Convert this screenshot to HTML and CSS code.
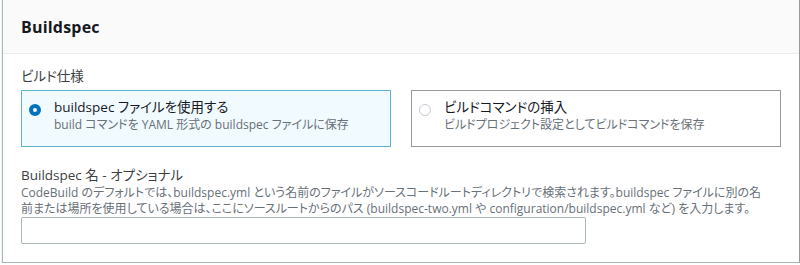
FILE: index.html
```html
<!DOCTYPE html>
<html lang="ja">
<head>
  <meta charset="UTF-8" />
  <title>Buildspec</title>
  <link rel="stylesheet" href="styles.css">
</head>
<body>
  <div class="panel">
    <div class="panel-header">
      <h2>Buildspec</h2>
    </div>

    <div class="panel-body">
      <div class="field">
        <div class="field-label">ビルド仕様</div>
        <div class="tiles">
          <label class="tile selected">
            <span class="radio"></span>
            <span class="tile-text">
              <span class="tile-title">buildspec ファイルを使用する</span>
              <span class="tile-desc">build コマンドを YAML 形式の buildspec ファイルに保存</span>
            </span>
          </label>
          <label class="tile">
            <span class="radio"></span>
            <span class="tile-text">
              <span class="tile-title">ビルドコマンドの挿入</span>
              <span class="tile-desc">ビルドプロジェクト設定としてビルドコマンドを保存</span>
            </span>
          </label>
        </div>
      </div>

      <div class="field">
        <div class="field-label">Buildspec 名 - オプショナル</div>
        <div class="field-desc">CodeBuild のデフォルトでは、buildspec.yml という名前のファイルがソースコードルートディレクトリで検索されます。buildspec ファイルに別の名前または場所を使用している場合は、ここにソースルートからのパス (buildspec-two.yml や configuration/buildspec.yml など) を入力します。</div>
        <input class="text-input" type="text">
      </div>
    </div>
  </div>
</body>
</html>
```

FILE: styles.css
```css
body {
  margin: 0;
  background-color: #ffffff;
  font-family: 'Open Sans', 'Noto Sans CJK JP', sans-serif;
  font-feature-settings: "palt";
  color: #16191f;
}

.panel {
  margin: -1px 0 0 2px;
  border: 1px solid #aab7b8;
  border-right-color: #999;
  box-shadow: 0 1px 1px rgba(0, 28, 36, 0.3);
  background-color: #ffffff;
  height: 264px;
  box-sizing: border-box;
}

.panel-header {
  background-color: #fafafa;
  border-bottom: 1px solid #eaeded;
  height: 54px;
  box-sizing: border-box;
  padding: 0 18px;
  display: flex;
  align-items: center;
}

.panel-header h2 {
  margin: 0;
  font-size: 16px;
  font-weight: 700;
  letter-spacing: 0.2px;
}

.panel-body {
  padding: 11px 18px 0 18px;
}

.field {
  margin-bottom: 17px;
}

.field-label {
  font-size: 13.5px;
  line-height: 22px;
  color: #3c3f44;
  margin-bottom: 3px;
}

.tiles {
  display: flex;
  gap: 20px;
}

.tile {
  flex: 1;
  height: 57px;
  box-sizing: border-box;
  border: 1px solid #999;
  display: flex;
  align-items: flex-start;
  padding: 7px 12px 0 7px;
  gap: 13px;
}

.tile.selected {
  border-color: #5fb3cc;
  background-color: #f1faff;
}

.radio {
  flex-shrink: 0;
  width: 12px;
  height: 12px;
  box-sizing: border-box;
  border-radius: 50%;
  border: 1px solid #c6cbd0;
  background: #fff;
  margin-top: 6px;
}

.tile.selected .radio {
  border: 4px solid #0073bb;
}

.tile-text {
  display: flex;
  flex-direction: column;
}

.tile-title {
  font-size: 13.5px;
  line-height: 19px;
  color: #16191f;
}

.tile-desc {
  font-size: 12px;
  line-height: 16px;
  color: #687078;
}

.field-desc {
  font-size: 12px;
  line-height: 16px;
  color: #687078;
  margin-top: -4px;
  margin-bottom: 0;
  padding-right: 10px;
}

.text-input {
  display: block;
  width: 565px;
  height: 27px;
  box-sizing: border-box;
  border: 1px solid #aab7b8;
  border-radius: 2px;
  margin: 0;
  font-size: 14px;
  outline: none;
}
```
